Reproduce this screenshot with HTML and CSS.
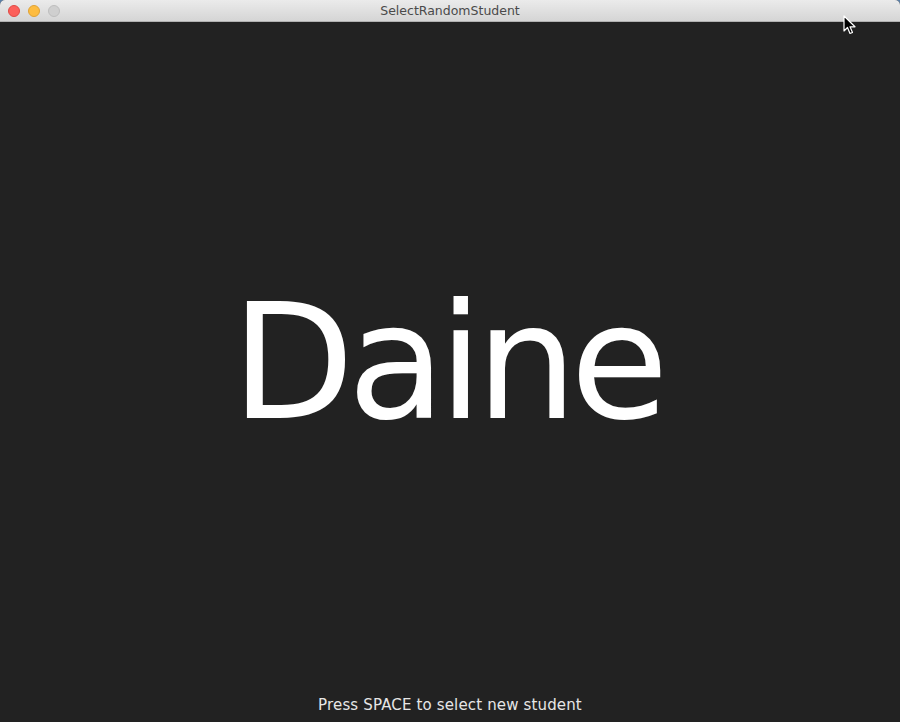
FILE: index.html
```html
<!DOCTYPE html>
<html>
<head>
<meta charset="utf-8">
<link rel="stylesheet" href="styles.css">
</head>
<body>
<div class="window">
  <div class="titlebar">
    <div class="lights">
      <span class="light red"></span>
      <span class="light yellow"></span>
      <span class="light gray"></span>
    </div>
    <div class="title">SelectRandomStudent</div>
  </div>
  <div class="content">
    <div class="name">Daine</div>
    <div class="hint">Press SPACE to select new student</div>
  </div>
  <svg class="cursor" width="14" height="20" viewBox="0 0 14 20">
    <path d="M1 1 L1 16 L4.5 12.5 L7 18.5 L9.5 17.5 L7 11.8 L12 11.8 Z" fill="#000" stroke="#fff" stroke-width="1.2" stroke-linejoin="round"/>
  </svg>
</div>
</body>
</html>
```
FILE: styles.css
```css
html, body {
  margin: 0;
  padding: 0;
  background: #5a7fa8;
}
.window {
  position: relative;
  width: 900px;
  height: 722px;
  display: flex;
  flex-direction: column;
  border-radius: 5px 5px 0 0;
  overflow: hidden;
  background: #222222;
}
.titlebar {
  height: 21px;
  flex: 0 0 21px;
  background: linear-gradient(#ebebeb, #d5d5d5);
  border-bottom: 1px solid #b1b1b1;
  display: flex;
  align-items: center;
  position: relative;
}
.lights {
  display: flex;
  gap: 8px;
  padding-left: 8px;
}
.light {
  width: 12px;
  height: 12px;
  border-radius: 50%;
  box-sizing: border-box;
}
.red { background: #fc605b; border: 0.5px solid #de4a45; }
.yellow { background: #fdbc40; border: 0.5px solid #dea236; }
.gray { background: #cfcfcf; border: 0.5px solid #bdbdbd; }
.title {
  position: absolute;
  left: 0;
  right: 0;
  top: 0;
  line-height: 22px;
  text-align: center;
  font-family: "Lucida Grande", "DejaVu Sans", sans-serif;
  font-size: 12.5px;
  color: #4a4a4a;
}
.content {
  flex: 1;
  display: flex;
  flex-direction: column;
  align-items: center;
  background: #222222;
  color: #fff;
  font-family: "Lucida Grande", "DejaVu Sans", sans-serif;
}
.name {
  margin-top: 241px;
  padding-right: 7px;
  font-size: 160px;
  line-height: 200px;
  letter-spacing: -7px;
}
.hint {
  margin-top: auto;
  margin-bottom: 7px;
  font-size: 15px;
  letter-spacing: 0.15px;
  color: #e6e6e6;
  line-height: 20px;
}
.cursor {
  position: absolute;
  left: 843px;
  top: 15px;
}
```
